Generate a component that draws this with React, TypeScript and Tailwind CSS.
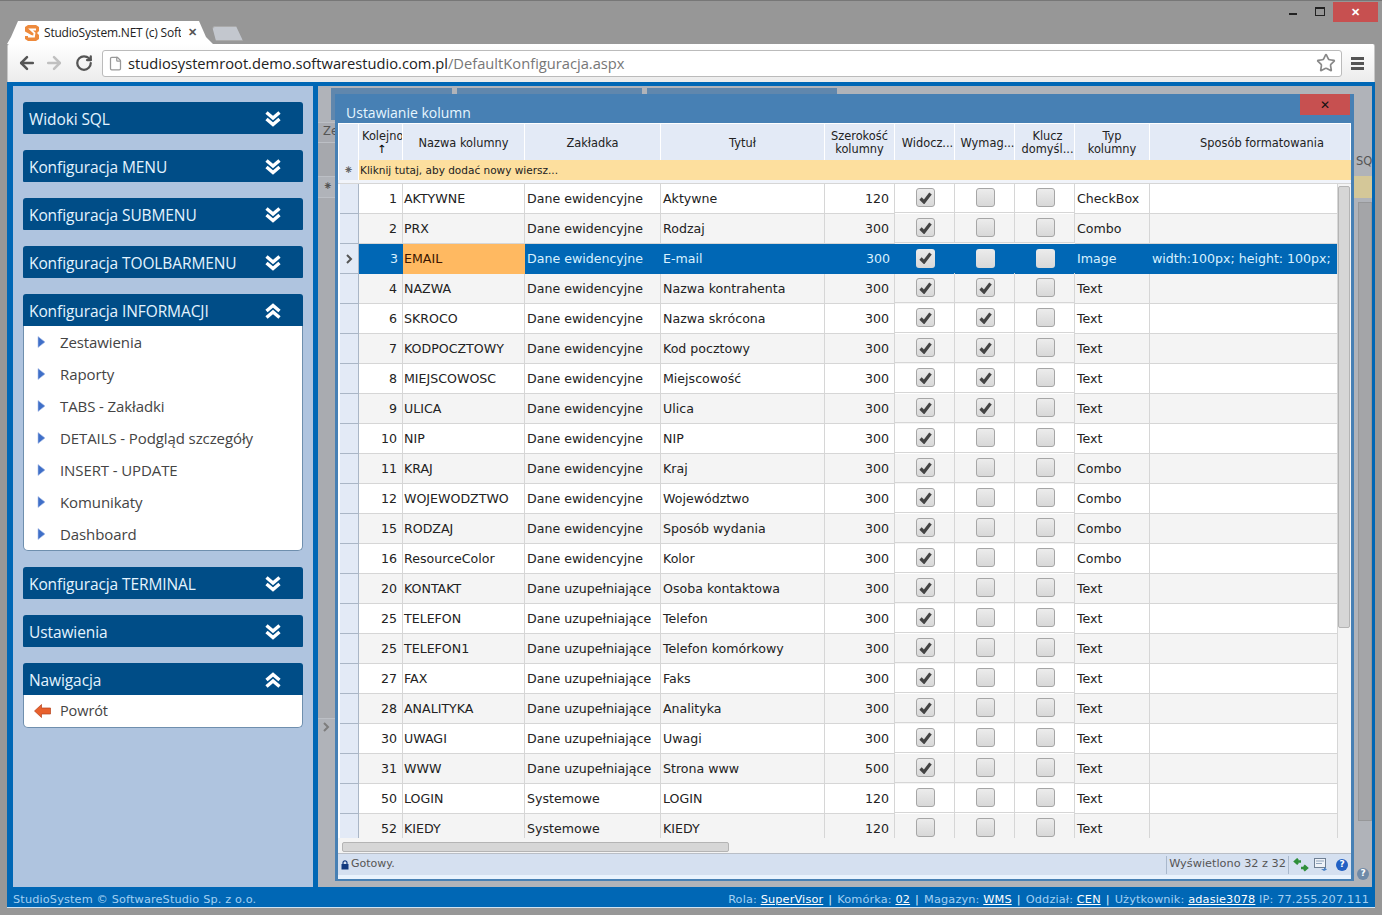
import { ArrowLeft, ArrowRight, File, RotateCw, Star } from "lucide-react";

const verdana = "font-['DejaVu_Sans','Verdana',sans-serif]";
const segoe = "font-['Open_Sans','Noto_Sans',sans-serif]";
const cols = "grid grid-cols-[21px_44px_122px_136px_164px_70px_60px_60px_60px_75px_187px]";
const headCols = "grid grid-cols-[20px_44px_122px_136px_164px_70px_60px_60px_60px_75px_201px]";

type Row = [string, string, number, string, number, string, string?];

const EW = "Dane ewidencyjne";
const UZ = "Dane uzupełniające";

const rows: Row[] = [
  ["1", "AKTYWNE", 0, "Aktywne", 120, "100", "CheckBox"],
  ["2", "PRX", 0, "Rodzaj", 300, "100", "Combo"],
  ["3", "EMAIL", 0, "E-mail", 300, "100", "Image"],
  ["4", "NAZWA", 0, "Nazwa kontrahenta", 300, "110", "Text"],
  ["6", "SKROCO", 0, "Nazwa skrócona", 300, "110", "Text"],
  ["7", "KODPOCZTOWY", 0, "Kod pocztowy", 300, "110", "Text"],
  ["8", "MIEJSCOWOSC", 0, "Miejscowość", 300, "110", "Text"],
  ["9", "ULICA", 0, "Ulica", 300, "110", "Text"],
  ["10", "NIP", 0, "NIP", 300, "100", "Text"],
  ["11", "KRAJ", 0, "Kraj", 300, "100", "Combo"],
  ["12", "WOJEWODZTWO", 0, "Województwo", 300, "100", "Combo"],
  ["15", "RODZAJ", 0, "Sposób wydania", 300, "100", "Combo"],
  ["16", "ResourceColor", 0, "Kolor", 300, "100", "Combo"],
  ["20", "KONTAKT", 1, "Osoba kontaktowa", 300, "100", "Text"],
  ["25", "TELEFON", 1, "Telefon", 300, "100", "Text"],
  ["25", "TELEFON1", 1, "Telefon komórkowy", 300, "100", "Text"],
  ["27", "FAX", 1, "Faks", 300, "100", "Text"],
  ["28", "ANALITYKA", 1, "Analityka", 300, "100", "Text"],
  ["30", "UWAGI", 1, "Uwagi", 300, "100", "Text"],
  ["31", "WWW", 1, "Strona www", 500, "100", "Text"],
  ["50", "LOGIN", 2, "LOGIN", 120, "000", "Text"],
  ["52", "KIEDY", 2, "KIEDY", 120, "000", "Text"],
];

const tabNames = [EW, UZ, "Systemowe"];

function Chevrons({ up }: { up?: boolean }) {
  return (
    <svg width="16" height="16" viewBox="0 0 16 16" className={up ? "rotate-180 translate-y-px" : "translate-y-px"} fill="none" stroke="#fff" strokeWidth="3.4">
      <path d="M1.500 1.500 8 7l6.500-5.500" />
      <path d="M1.500 8 8 13.500 14.500 8" />
    </svg>
  );
}

function Panel({ title, open, children }: { title: string; open?: boolean; children?: React.ReactNode }) {
  return (
    <div>
      <div className={`h-8 bg-[#004d87] flex items-center justify-between pl-1.5 pr-[22px] rounded-t-[3px] text-[#e4f4ff] text-[15.5px] tracking-[-0.1px] ${open ? "" : "rounded-b-[1px]"}`}>
        <span className="pt-[3px]">{title}</span>
        <Chevrons up={open} />
      </div>
      {children && (
        <div className="bg-white border border-t-0 border-[#6f8fae] rounded-b-[5px] text-[#444] text-[15px] tracking-[-0.1px]">
          {children}
        </div>
      )}
    </div>
  );
}

function MenuItem({ label }: { label: string }) {
  return (
    <div className="h-8 flex items-center pl-[13px]">
      <svg width="9" height="12" viewBox="0 0 9 12" className="mr-[14px]">
        <path d="M1 0.500 8 6 1 11.500Z" fill="#3f6fc8" stroke="#a9bde8" strokeWidth="0.6" />
      </svg>
      <span>{label}</span>
    </div>
  );
}

function Check({ on, selected }: { on: boolean; selected: boolean }) {
  return (
    <div className={`w-[19px] h-[19px] rounded-[3px] flex items-center justify-center bg-gradient-to-b from-[#ececec] to-[#d8d8d8] ${selected ? "" : "border border-[#a6a6a6]"}`}>
      {on && (
        <svg width="13" height="12" viewBox="0 0 13 12" fill="none" stroke="#444" strokeWidth="3.2">
          <path d="M1.500 6.500 5 10 11.500 1.500" />
        </svg>
      )}
    </div>
  );
}

function HeadCell({ children, shift }: { children?: React.ReactNode; shift?: string }) {
  return (
    <div className={`border-r border-white flex items-center justify-center text-center leading-[13px] overflow-hidden pt-0.5 ${shift ?? ""}`}>
      {children}
    </div>
  );
}

function GridRow({ row, index }: { row: Row; index: number }) {
  const [no, name, tab, title, width, flags, type] = row;
  const selected = no === "3";
  const bg = selected ? "bg-[#0067b5] text-[#d9f1ff]" : index % 2 ? "bg-[#f4f4f4] text-[#222]" : "bg-white text-[#222]";
  const line = selected ? "" : "border-r border-b border-[#d6d6d6]";
  const cell = `${line} flex items-center whitespace-nowrap overflow-hidden`;
  const text = selected ? "" : "pt-0.5";
  return (
    <div className={`${cols} h-[30px] ${bg}`}>
      <div className="bg-white pl-0.5">
        <div className="h-full bg-[#e3eaf6] border-r border-b border-[#aab6c6] flex items-center justify-center">
          {selected && (
            <svg width="7" height="10" viewBox="0 0 7 10" fill="none" stroke="#555" strokeWidth="2">
              <path d="M1 1l4 4-4 4" />
            </svg>
          )}
        </div>
      </div>
      <div className={`${cell} ${text} justify-end pr-[5px]`}>{no}</div>
      <div className={`${cell} ${text} pl-px ${selected ? "bg-[#ffb961] text-[#3a1600]" : ""}`}>{name}</div>
      <div className={`${cell} ${text} pl-0.5`}>{tabNames[tab]}</div>
      <div className={`${cell} ${text} pl-0.5`}>{title}</div>
      <div className={`${cell} ${text} justify-end pr-[5px]`}>{width}</div>
      {flags.split("").map((f, i) => (
        <div key={i} className={`${cell} justify-center pl-px -translate-y-px`}>
          <Check on={f === "1"} selected={selected} />
        </div>
      ))}
      <div className={`${cell} ${text} pl-0.5`}>{type}</div>
      <div className={`${selected ? "" : "border-b border-[#d6d6d6]"} flex items-center whitespace-nowrap overflow-hidden pl-0.5`}>
        {selected ? "width:100px; height: 100px;" : ""}
      </div>
    </div>
  );
}

function HelpIcon({ dim }: { dim?: boolean }) {
  return (
    <span className={`w-[12px] h-[12px] rounded-full flex items-center justify-center text-[9px] font-bold text-white ${dim ? "bg-[#6f8aa8]" : "bg-[#2160c4]"}`}>?</span>
  );
}

function ModalDialog() {
  return (
    <div className="absolute left-[17px] top-2 w-[1019px] h-[787px] bg-[#4780b4] flex flex-col px-[3px] pb-[2px]">
      <div className={`${segoe} h-[29px] shrink-0 pl-2 pt-[9px] leading-5 text-[#e6f6ff] text-[14px] relative`}>
        Ustawianie kolumn
        <div className="absolute right-[1px] top-0 w-[50px] h-[21px] bg-[#c75050] flex items-center justify-center text-[#111] text-[12px]">✕</div>
      </div>
      <div className={`${verdana} flex-1 min-h-0 bg-white flex flex-col pt-px text-[12.6px]`}>
        <div className={`${headCols} h-9 shrink-0 bg-[#e3eaf6] text-[#222] text-[11.4px] ml-px`}>
          <HeadCell />
          <HeadCell>
            <div className="whitespace-nowrap w-full text-left pl-[3px]">
              Kolejność
              <div className="text-center text-black">↑</div>
            </div>
          </HeadCell>
          <HeadCell>Nazwa kolumny</HeadCell>
          <HeadCell>Zakładka</HeadCell>
          <HeadCell>Tytuł</HeadCell>
          <HeadCell>Szerokość<br />kolumny</HeadCell>
          <HeadCell shift="pl-1.5">Widocz...</HeadCell>
          <HeadCell shift="pl-1.5">Wymag...</HeadCell>
          <HeadCell shift="pl-1.5">Klucz<br />domyśl...</HeadCell>
          <HeadCell>Typ<br />kolumny</HeadCell>
          <HeadCell shift="pl-6">Sposób formatowania</HeadCell>
        </div>
        <div className="h-5 shrink-0 flex bg-[#fddf9e] text-[#222] text-[10.5px] ml-px">
          <div className="w-5 bg-[#e3eaf6] border-r border-white flex items-center justify-center text-[#666] text-[12px]">⁕</div>
          <div className="pl-px pt-px flex items-center">Kliknij tutaj, aby dodać nowy wiersz...</div>
        </div>
        <div className="h-1 shrink-0 bg-[#f1f4fa] border-b border-[#d6d6d6]" />
        <div className="flex-1 min-h-0 flex">
          <div className="w-[999px] overflow-hidden">
            {rows.map((r, i) => (
              <GridRow key={i} row={r} index={i} />
            ))}
          </div>
          <div className="flex-1 bg-[#f4f4f4] border-l border-[#d6d6d6] pt-[2px]">
            <div className="h-[442px] w-[12px] bg-[#d6d6d6] border border-[#b4b4b4] rounded-[2px]" />
          </div>
        </div>
        <div className="h-4 shrink-0 bg-[#f4f4f4] border-b border-[#b9bec6] pl-1 pt-1">
          <div className="w-[387px] h-[10px] bg-[#d6d6d6] border border-[#b4b4b4] rounded-[2px]" />
        </div>
        <div className="h-[21px] shrink-0 bg-[#d5e0f0] flex items-center pl-[3px] text-[#555] text-[11px]">
          <svg width="8" height="10" viewBox="0 0 8 10" className="mr-0.5">
            <path d="M2 4V2.800a2 2 0 0 1 4 0V4" fill="none" stroke="#123a80" strokeWidth="1.2" />
            <rect x="0.5" y="4" width="7" height="5.500" fill="#123a80" />
          </svg>
          <span>Gotowy.</span>
          <div className="ml-auto flex items-center h-[18px] border-x border-[#a9b8cc] px-0.5 text-[11.3px]">Wyświetlono 32 z 32</div>
          <div className="flex items-center w-[62px] pl-1 gap-[5px]">
            <svg width="16" height="14" viewBox="0 0 16 14" fill="none" stroke="#2f8f3a" strokeWidth="2.4">
              <path d="M8 3.500H3M5 .8 2 3.500l3 2.700" />
              <path d="M8 10h5M11 7.300 14 10l-3 2.700" />
            </svg>
            <svg width="13" height="13" viewBox="0 0 13 13">
              <rect x="0.5" y="0.5" width="11" height="9" fill="#eef2f8" stroke="#6f7f93" />
              <path d="M2 3h8M2 5.500h6" stroke="#8fa3bb" />
              <path d="M7 11h3V9l3 2.500L10 13Z" fill="#4a80c4" />
            </svg>
            <span className="ml-[4px]">
              <HelpIcon />
            </span>
          </div>
        </div>
        <div className="h-1 shrink-0 bg-[#eaf3fd]" />
      </div>
    </div>
  );
}

function Backdrop() {
  return (
    <div className={`${verdana} flex-1 bg-[#b0b3b9] flex text-[#555] text-[11.5px] relative`}>
      <div className="w-[17px] flex flex-col">
        <div className="h-9" />
        <div className="h-[21px] bg-[#a9abb1] border-y border-[#bcbfc5] pl-[5px] leading-4 overflow-hidden">Ze</div>
        <div className="h-[33px] bg-[#a6a8ad]" />
        <div className="h-[22px] bg-[#b0b3b9] border-y border-[#bcbfc5] flex items-center pl-[5px]">⁕</div>
        <div className="h-[521px] bg-[#a9abb0] border-b border-[#bcbfc5]" />
        <div className="flex-1 flex items-start pl-[5px] pt-[3px]">
          <svg width="7" height="10" viewBox="0 0 7 10" fill="none" stroke="#7d7d7d" strokeWidth="2">
            <path d="M1 1l4 4-4 4" />
          </svg>
        </div>
      </div>
      <div className="flex-1 pt-0.5 relative">
        <div className="flex h-1.5 gap-[5px] -ml-1">
          <div className="w-[121px] bg-[#6087ad]" />
          <div className="w-[185px] bg-[#6087ad]" />
          <div className="w-[190px] bg-[#6087ad]" />
        </div>
      </div>
      <div className="w-[18px] flex flex-col">
        <div className="h-9" />
        <div className="h-[54px] pt-[31px] pl-0.5 overflow-hidden">SQ</div>
        <div className="h-[22px] bg-[#d4c798]" />
        <div className="flex-1 pl-1 pt-1 pb-[40px]">
          <div className="h-full bg-[#a4a5a8] border border-[#969799]" />
        </div>
        <div className="h-[26px] flex items-center justify-center">
          <HelpIcon dim />
        </div>
      </div>
      <div className="absolute left-[13px] top-0.5 w-1 h-[32px] bg-[#6087ad]" />
      <ModalDialog />
    </div>
  );
}

function Sep() {
  return <span className="text-[#d9f1ff] mx-[5px]">|</span>;
}

function Link({ children }: { children: React.ReactNode }) {
  return <span className="text-white underline">{children}</span>;
}

export default function App() {
  return (
    <div className="w-[1382px] h-[915px] overflow-hidden bg-[#979797] border-t border-[#777] flex flex-col pl-[7px] pr-[7px] pb-[7px]">
      <div className="h-[43px] shrink-0 flex items-end relative">
        <div className={`${segoe} w-[206px] h-[23px] bg-white flex items-center pl-[18px] text-[#222] text-[12px] tracking-[-0.2px] [clip-path:polygon(0_100%,4px_70%,11px_0,192px_0,199px_70%,206px_100%)]`}>
          <svg width="14" height="16" viewBox="0 0 14 16" className="mr-[5px] shrink-0">
            <path d="M3 0h8l3 2v4l-2 2 2 2v4l-3 2H3L0 14v-3h5l4 .5L0 6.500V2Z" fill="#ee8a3c" />
            <path d="M11 4.500H5.500L9.500 8 9 11.500H3" fill="none" stroke="#fff" strokeWidth="1.800" />
          </svg>
          <span className="w-[137px] overflow-hidden whitespace-nowrap">StudioSystem.NET (c) Soft</span>
          <span className="ml-[7px] text-[#555] text-[11px] font-bold">✕</span>
        </div>
        <div className="w-[31px] h-[15px] mb-[3px] -ml-px bg-[#c3c7ce] border border-[#aaa] rounded-t-[3px] [clip-path:polygon(0_0,24px_0,31px_100%,4px_100%)]" />
        <div className="ml-auto -mr-[3px] self-start flex items-start">
          <div className="w-[18px] h-[14px] mr-[13px] flex items-end justify-center">
            <div className="w-2 h-[2px] bg-[#222]" />
          </div>
          <div className="w-[10px] h-[9px] mt-[6px] mr-[8px] border border-[#222] border-t-2" />
          <div className="w-[45px] h-5 mt-px bg-[#c75050] flex items-center justify-center text-white text-[11px] font-bold">✕</div>
        </div>
      </div>
      <div className="h-[38px] shrink-0 bg-gradient-to-b from-white to-[#ececec] rounded-t-[2px] flex items-center pl-[9px] pr-[10px] border-x border-[#c6c6c6]">
        <ArrowLeft size={20} strokeWidth={3} className="text-[#555] mr-[7px]" />
        <ArrowRight size={20} strokeWidth={3} className="text-[#c0c0c0] mr-[11px]" />
        <RotateCw size={18} strokeWidth={3} className="text-[#555] mr-[9px]" />
        <div className={`${segoe} flex-1 h-[27px] mr-[9px] bg-white border border-[#bbb] rounded-[3px] flex items-center pl-[5px] pr-px text-[14.7px]`}>
          <File size={15} className="text-[#999] mr-[5px]" />
          <span className="text-[#222]">studiosystemroot.demo.softwarestudio.com.pl</span>
          <span className="text-[#777]">/DefaultKonfiguracja.aspx</span>
          <Star size={20} className="ml-auto text-[#888] mr-1" />
        </div>
        <div className="w-[13px] flex flex-col gap-[2px]">
          <div className="h-[3px] bg-[#555]" />
          <div className="h-[3px] bg-[#555]" />
          <div className="h-[3px] bg-[#555]" />
        </div>
      </div>
      <div className="flex-1 min-h-0 flex flex-col bg-[#0067b5] pt-1 pl-[6px] pr-[3px] border-b border-[#cfe2f2]">
        <div className="flex-1 min-h-0 flex gap-[5px]">
          <div className={`${segoe} w-[300px] bg-[#afc4df] px-2.5 pt-4 flex flex-col gap-4`}>
            <Panel title="Widoki SQL" />
            <Panel title="Konfiguracja MENU" />
            <Panel title="Konfiguracja SUBMENU" />
            <Panel title="Konfiguracja TOOLBARMENU" />
            <Panel title="Konfiguracja INFORMACJI" open>
              <MenuItem label="Zestawienia" />
              <MenuItem label="Raporty" />
              <MenuItem label="TABS - Zakładki" />
              <MenuItem label="DETAILS - Podgląd szczegóły" />
              <MenuItem label="INSERT - UPDATE" />
              <MenuItem label="Komunikaty" />
              <MenuItem label="Dashboard" />
            </Panel>
            <Panel title="Konfiguracja TERMINAL" />
            <Panel title="Ustawienia" />
            <Panel title="Nawigacja" open>
              <div className="h-8 flex items-center pl-[10px]">
                <svg width="17" height="14" viewBox="0 0 17 14" className="mr-[9px]">
                  <path d="M7.500 0.500 0.500 7l7 6.500V10h9V4h-9Z" fill="#e8602c" stroke="#b5431c" strokeWidth="0.7" />
                </svg>
                <span className="text-[14.5px]">Powrót</span>
              </div>
            </Panel>
          </div>
          <Backdrop />
        </div>
        <div className={`${verdana} h-5 shrink-0 flex items-center justify-between pt-1.5 pr-[3px] text-[#a3d0f2] text-[11.3px] tracking-[0.14px]`}>
          <span>StudioSystem © SoftwareStudio Sp. z o.o.</span>
          <span className="whitespace-nowrap">
            Rola: <Link>SuperVisor</Link>
            <Sep />
            Komórka: <Link>02</Link>
            <Sep />
            Magazyn: <Link>WMS</Link>
            <Sep />
            Oddział: <Link>CEN</Link>
            <Sep />
            Użytkownik: <Link>adasie3078</Link> IP: 77.255.207.111
          </span>
        </div>
      </div>
    </div>
  );
}
